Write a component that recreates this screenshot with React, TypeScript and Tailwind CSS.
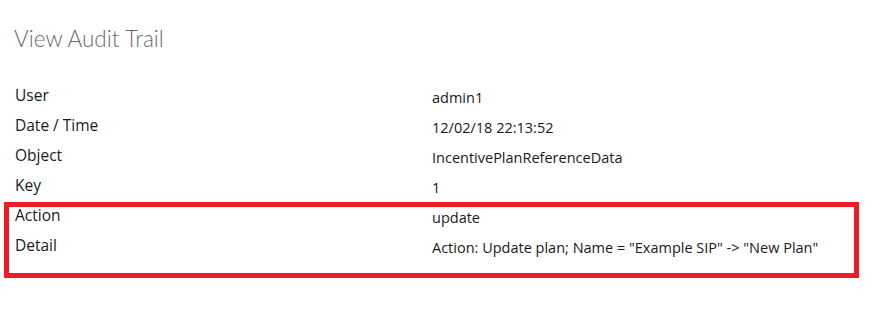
import React from "react";

const rows: [string, string][] = [
  ["User", "admin1"],
  ["Date / Time", "12/02/18 22:13:52"],
  ["Object", "IncentivePlanReferenceData"],
  ["Key", "1"],
  ["Action", "update"],
  ["Detail", 'Action: Update plan; Name = "Example SIP" -> "New Plan"'],
];

export default function App() {
  return (
    <div className="relative w-[894px] h-[309px] bg-white overflow-hidden">
      <h1
        className="ml-[14px] pt-[24px] text-[22.5px] leading-[29px] font-light text-[#6a6a6a]"
        style={{ fontFamily: "Lato, 'Open Sans', sans-serif" }}
      >
        View Audit Trail
      </h1>
      <div
        className="mt-[27px] ml-[15px] grid grid-cols-[417px_1fr] text-[#1a1a1a]"
        style={{ fontFamily: "'Open Sans', sans-serif" }}
      >
        {rows.map(([label, value]) => (
          <React.Fragment key={label}>
            <div className="h-[30px] text-[15.5px] leading-[30px]">{label}</div>
            <div className="h-[30px] pt-[3px] text-[14.5px] leading-[30px]">{value}</div>
          </React.Fragment>
        ))}
      </div>
      <div className="absolute left-[4px] top-[202px] w-[855px] h-[76px] border-[5px] border-[#ed1c24]" />
    </div>
  );
}
